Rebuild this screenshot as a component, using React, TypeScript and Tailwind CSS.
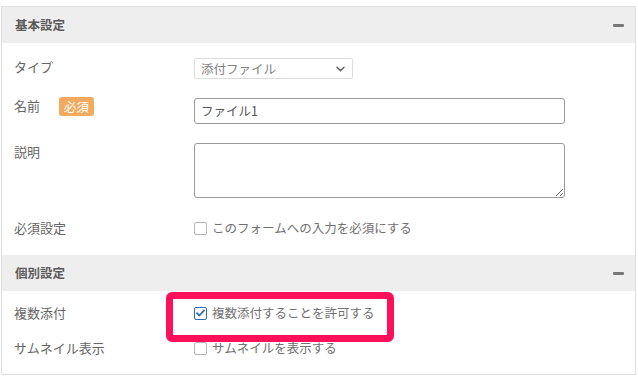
import React, {FunctionComponent, ReactNode} from "react";

interface SectionHeaderProps {
	title: string;
}

const SectionHeader: FunctionComponent<SectionHeaderProps> = ({title}) => {
	return (
		<div className="h-[36px] bg-[#eeeeee] flex items-center justify-between pl-[13px] pr-[11px]">
			<span className="text-[12.5px] font-bold text-[#5a5a5a] leading-[20px]">
				{title}
			</span>
			<span className="block w-[11px] h-[3px] rounded-[1px] bg-[#777777]"></span>
		</div>
	);
};

interface CheckBoxProps {
	checked?: boolean;
	label: string;
}

const CheckBox: FunctionComponent<CheckBoxProps> = ({checked, label}) => {
	return (
		<div className="flex items-center gap-[5px] h-[20px]">
			{checked ? (
				<span className="w-[13px] h-[13px] rounded-[2px] border border-[#2c6cb4] bg-white flex items-center justify-center">
					<svg width="9" height="8" viewBox="0 0 9 8" fill="none">
						<path
							d="M1 4.2L3.4 6.5L8 1.3"
							stroke="#2c6cb4"
							strokeWidth="1.8"
							strokeLinecap="round"
							strokeLinejoin="round"
						/>
					</svg>
				</span>
			) : (
				<span className="w-[13px] h-[13px] rounded-[2px] border border-[#b5b5b5] bg-white"></span>
			)}
			<span className="text-[12.5px] text-[#707070] leading-[20px]">{label}</span>
		</div>
	);
};

interface RowProps {
	label: ReactNode;
	className?: string;
	children: ReactNode;
}

const Row: FunctionComponent<RowProps> = ({label, className, children}) => {
	return (
		<div className={`flex items-start ${className ?? ""}`}>
			<div className="w-[192px] shrink-0 pl-[12px]">{label}</div>
			<div>{children}</div>
		</div>
	);
};

const App: FunctionComponent = () => {
	return (
		<div className="w-[638px] h-[376px] bg-white pt-[6px] font-['Noto_Sans_CJK_JP',sans-serif]">
			<div className="ml-[1px] w-[635px] border border-[#dedede] bg-white">
				<SectionHeader title="基本設定" />
				<div className="pt-[15px] pb-[17px]">
					<Row
						label={
							<span className="block mt-[-1px] text-[13px] leading-[20px] text-[#666666]">
								タイプ
							</span>
						}
					>
						<div className="w-[159px] h-[21px] border border-[#dddddd] rounded-[2px] flex items-center justify-between pl-[6px] pr-[7px]">
							<span className="text-[12.5px] text-[#808080] leading-[19px]">
								添付ファイル
							</span>
							<svg width="9" height="6" viewBox="0 0 9 6" fill="none">
								<path
									d="M1 1.2L4.5 4.6L8 1.2"
									stroke="#666666"
									strokeWidth="1.5"
									strokeLinecap="round"
								/>
							</svg>
						</div>
					</Row>
					<Row
						className="mt-[19px]"
						label={
							<div className="flex items-center gap-[19px] mt-[-2px]">
								<span className="text-[13px] leading-[20px] text-[#666666]">名前</span>
								<span className="h-[19px] px-[5px] rounded-[3px] bg-[#f2aa5e] text-white text-[12.5px] leading-[19px]">
									必須
								</span>
							</div>
						}
					>
						<div className="w-[371px] h-[26px] border border-[#9a9a9a] rounded-[3px] flex items-center pl-[6px]">
							<span className="text-[12.5px] text-[#555555] leading-[20px]">ファイル1</span>
						</div>
					</Row>
					<Row
						className="mt-[19px]"
						label={
							<span className="block mt-[-1px] text-[13px] leading-[20px] text-[#666666]">
								説明
							</span>
						}
					>
						<textarea
							className="block w-[371px] h-[55px] border border-[#9a9a9a] rounded-[3px] outline-none"
							defaultValue=""
						/>
					</Row>
					<Row
						className="mt-[20px]"
						label={
							<span className="block text-[13px] leading-[20px] text-[#666666]">
								必須設定
							</span>
						}
					>
						<CheckBox label="このフォームへの入力を必須にする" />
					</Row>
				</div>
				<SectionHeader title="個別設定" />
				<div className="relative pt-[12px] pb-[16px]">
					<Row
						label={
							<span className="block text-[13px] leading-[20px] text-[#666666]">
								複数添付
							</span>
						}
					>
						<CheckBox checked label="複数添付することを許可する" />
					</Row>
					<Row
						className="mt-[15px]"
						label={
							<span className="block text-[13px] leading-[20px] text-[#666666]">
								サムネイル表示
							</span>
						}
					>
						<CheckBox label="サムネイルを表示する" />
					</Row>
					<div className="absolute left-[164px] top-[1px] w-[228px] h-[50px] border-[7px] border-[#ff105a] rounded-[6px]"></div>
				</div>
			</div>
		</div>
	);
};

export default App;
